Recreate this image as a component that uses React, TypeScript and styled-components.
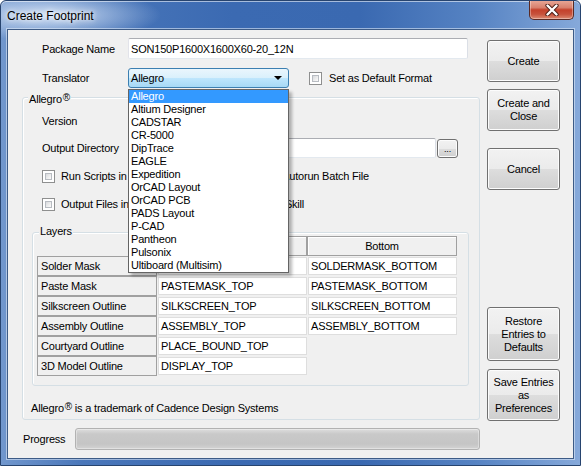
import styled, { createGlobalStyle } from 'styled-components'

const GlobalStyle = createGlobalStyle`
  html, body {
    margin: 0;
    padding: 0;
    background: #ffffff;
  }
  body {
    font-family: "Liberation Sans", Arial, sans-serif;
    font-size: 11px;
    letter-spacing: -0.2px;
    color: #000;
  }
`

const translators = [
  'Allegro',
  'Altium Designer',
  'CADSTAR',
  'CR-5000',
  'DipTrace',
  'EAGLE',
  'Expedition',
  'OrCAD Layout',
  'OrCAD PCB',
  'PADS Layout',
  'P-CAD',
  'Pantheon',
  'Pulsonix',
  'Ultiboard (Multisim)',
]

const layers = [
  { name: 'Solder Mask', top: 'SOLDERMASK_TOP', bottom: 'SOLDERMASK_BOTTOM' },
  { name: 'Paste Mask', top: 'PASTEMASK_TOP', bottom: 'PASTEMASK_BOTTOM' },
  { name: 'Silkscreen Outline', top: 'SILKSCREEN_TOP', bottom: 'SILKSCREEN_BOTTOM' },
  { name: 'Assembly Outline', top: 'ASSEMBLY_TOP', bottom: 'ASSEMBLY_BOTTOM' },
  { name: 'Courtyard Outline', top: 'PLACE_BOUND_TOP' },
  { name: '3D Model Outline', top: 'DISPLAY_TOP' },
]

const Window = styled.div`
  width: 581px;
  height: 466px;
  box-sizing: border-box;
  border: 1px solid #27446f;
  border-radius: 6px 6px 0 0;
  overflow: hidden;
  display: flex;
  flex-direction: column;
  background:
    radial-gradient(ellipse 110px 26px at 50px 14px, rgba(214, 228, 247, 0.95), rgba(214, 228, 247, 0) 100%),
    linear-gradient(90deg, #7197cd 0%, #4a77ba 14%, #3b6ab2 40%, #3a69b1 62%, #5683c3 82%, #86a9da 100%);
  box-shadow: inset 0 1px 0 rgba(255, 255, 255, 0.55);
`

const TitleBar = styled.div`
  height: 28px;
  flex: none;
  display: flex;
  align-items: flex-start;
  padding-left: 6px;
`

const Title = styled.span`
  margin-top: 8px;
  font-size: 12px;
  letter-spacing: 0;
  line-height: 14px;
  color: #000;
  text-shadow: 0 0 8px #fff, 0 0 4px rgba(255, 255, 255, 0.9);
`

const CloseButton = styled.div`
  margin-left: auto;
  margin-right: 6px;
  margin-top: -1px;
  width: 45px;
  height: 20px;
  box-sizing: border-box;
  border: 1px solid #5a2a24;
  border-top: none;
  border-radius: 0 0 5px 5px;
  background: linear-gradient(#e9aa9a 0%, #d8806d 40%, #c4412b 52%, #c7523c 75%, #dc8b72 100%);
  box-shadow: inset 0 0 0 1px rgba(255, 255, 255, 0.35);
  display: flex;
  align-items: center;
  justify-content: center;
`

const Client = styled.div`
  flex: 1;
  margin: 0 6px 6px 6px;
  border: 1px solid #3d5b86;
  box-shadow: 0 0 0 1px rgba(220, 232, 247, 0.6);
  background: #f0f0f0;
  display: grid;
  grid-template-columns: 472px 73px;
  column-gap: 7px;
  padding-right: 13px;
`

const MainColumn = styled.div`
  display: flex;
  flex-direction: column;
  padding-top: 8px;
`

const SideColumn = styled.div`
  display: flex;
  flex-direction: column;
  padding-top: 10px;
  padding-bottom: 37px;
`

const Row = styled.div<{ $h: number; $mt?: number; $pl?: number }>`
  display: flex;
  align-items: center;
  height: ${(p) => p.$h}px;
  margin-top: ${(p) => p.$mt ?? 0}px;
  padding-left: ${(p) => p.$pl ?? 0}px;
  flex: none;
`

const FieldLabel = styled.span<{ $w: number }>`
  width: ${(p) => p.$w}px;
  flex: none;
  white-space: nowrap;
`

const TextBox = styled.div<{ $w: number; $h: number }>`
  width: ${(p) => p.$w}px;
  height: ${(p) => p.$h}px;
  box-sizing: border-box;
  flex: none;
  background: #fff;
  border: 1px solid;
  border-color: #abadb3 #dbdfe6 #e3e9ef #e2e3ea;
  border-radius: 2px;
  padding-left: 2px;
  display: flex;
  align-items: center;
  white-space: nowrap;
`

const ComboWrap = styled.div`
  position: relative;
  flex: none;
`

const Combo = styled.div`
  width: 161px;
  height: 20px;
  box-sizing: border-box;
  border: 1px solid #3c7fb1;
  border-radius: 3px;
  background: linear-gradient(#eaf6fd 0%, #d9f0fc 50%, #bee6fd 51%, #a7d9f5 100%);
  display: flex;
  align-items: center;
  padding-left: 2px;
`

const Arrow = styled.span`
  margin-left: auto;
  margin-right: 6px;
  width: 0;
  height: 0;
  border-left: 4px solid transparent;
  border-right: 4px solid transparent;
  border-top: 4px solid #000;
`

const DropList = styled.ul`
  position: absolute;
  top: calc(100% + 1px);
  left: 0;
  z-index: 10;
  width: 161px;
  box-sizing: border-box;
  margin: 0;
  padding: 0;
  list-style: none;
  background: #fff;
  border: 1px solid #646464;
  box-shadow: 3px 3px 3px rgba(0, 0, 0, 0.28);
`

const DropItem = styled.li<{ $selected?: boolean }>`
  height: 13px;
  line-height: 13px;
  padding-left: 2px;
  white-space: nowrap;
  background: ${(p) => (p.$selected ? '#3399ff' : 'transparent')};
  color: ${(p) => (p.$selected ? '#fff' : '#000')};
`

const CheckBox = styled.span<{ $ml?: number }>`
  width: 13px;
  height: 13px;
  box-sizing: border-box;
  flex: none;
  margin-left: ${(p) => p.$ml ?? 0}px;
  border: 1px solid #8e8f8f;
  background: #fff;
  position: relative;

  &::after {
    content: '';
    position: absolute;
    inset: 2px;
    border: 1px solid #b8bcc2;
    background: linear-gradient(135deg, #d8dadd 0%, #f2f2f2 70%, #fafafa 100%);
  }
`

const CheckText = styled.span<{ $ml: number }>`
  margin-left: ${(p) => p.$ml}px;
  white-space: nowrap;
`

const GroupBox = styled.div<{ $h: number; $mt: number; $ml: number; $w: number }>`
  position: relative;
  flex: none;
  box-sizing: border-box;
  height: ${(p) => p.$h}px;
  width: ${(p) => p.$w}px;
  margin-top: ${(p) => p.$mt}px;
  margin-left: ${(p) => p.$ml}px;
  border: 1px solid #d5dfe5;
  border-radius: 3px;
  box-shadow: inset 1px 1px 0 #fff;
  display: flex;
  flex-direction: column;
`

const GroupLabel = styled.span<{ $left: number; $top: number }>`
  position: absolute;
  left: ${(p) => p.$left}px;
  top: ${(p) => p.$top}px;
  padding: 0 1px;
  line-height: 13px;
  background: #f0f0f0;
  white-space: nowrap;
`

const Reg = styled.span`
  font-size: 10px;
  vertical-align: 2px;
  margin-left: 1px;
`

const WinButton = styled.div<{ $h: number; $mt?: number; $auto?: boolean }>`
  height: ${(p) => p.$h}px;
  margin-top: ${(p) => (p.$auto ? 'auto' : `${p.$mt ?? 0}px`)};
  box-sizing: border-box;
  flex: none;
  border: 1px solid #707070;
  border-radius: 3px;
  background: linear-gradient(#f2f2f2 0%, #ebebeb 50%, #dddddd 51%, #cfcfcf 100%);
  box-shadow: inset 0 0 0 1px #fcfcfc;
  display: flex;
  align-items: center;
  justify-content: center;
  text-align: center;
  line-height: 13px;
`

const SmallButton = styled(WinButton)`
  width: 21px;
  margin-left: 1px;
  align-items: flex-end;
  padding-bottom: 3px;
  font-size: 9px;
  line-height: 9px;
`

const LayerGrid = styled.div`
  display: grid;
  grid-template-columns: 120px 150px 150px;
  grid-auto-rows: 20px;
  width: 420px;
  margin: 3px 0 0 4px;
`

const HeaderCell = styled.div`
  box-sizing: border-box;
  border: 1px solid #a0a0a0;
  background: #f0f0f0;
  display: flex;
  align-items: center;
  justify-content: center;
  box-shadow: inset 1px 1px 0 #fff;
`

const NameCell = styled.div`
  box-sizing: border-box;
  border: 1px solid #a0a0a0;
  background: #f0f0f0;
  display: flex;
  align-items: center;
  padding-left: 3px;
  white-space: nowrap;
`

const ValueCell = styled.div`
  box-sizing: border-box;
  margin: 1px 0 1px 1px;
  border: 1px solid #dedede;
  background: #fff;
  display: flex;
  align-items: center;
  padding-left: 2px;
  white-space: nowrap;
`

const Note = styled.div`
  margin: 14px 0 0 8px;
  line-height: 13px;
  white-space: nowrap;
`

const ProgressTrack = styled.div`
  width: 405px;
  height: 22px;
  box-sizing: border-box;
  border: 1px solid #b2b2b2;
  border-radius: 3px;
  background: linear-gradient(#dedede 0%, #c9c9c9 25%, #c5c5c5 75%, #d3d3d3 100%);
  box-shadow: inset 0 0 0 1px rgba(255, 255, 255, 0.35);
`

export default function App() {
  return (
    <>
      <GlobalStyle />
      <Window>
        <TitleBar>
          <Title>Create Footprint</Title>
          <CloseButton>
            <svg width="14" height="12" viewBox="0 0 14 12">
              <path d="M2.5 1.5 L11.5 10.5 M11.5 1.5 L2.5 10.5" stroke="#4a1c14" strokeWidth="4.2" strokeLinecap="round" />
              <path d="M2.5 1.5 L11.5 10.5 M11.5 1.5 L2.5 10.5" stroke="#ffffff" strokeWidth="2.4" strokeLinecap="round" />
            </svg>
          </CloseButton>
        </TitleBar>
        <Client>
          <MainColumn>
            <Row $h={21} $pl={34}>
              <FieldLabel $w={86}>Package Name</FieldLabel>
              <TextBox $w={340} $h={21}>SON150P1600X1600X60-20_12N</TextBox>
            </Row>
            <Row $h={20} $mt={9} $pl={34}>
              <FieldLabel $w={86}>Translator</FieldLabel>
              <ComboWrap>
                <Combo>
                  <span>Allegro</span>
                  <Arrow />
                </Combo>
                <DropList>
                  {translators.map((t, i) => (
                    <DropItem key={t} $selected={i === 0}>
                      {t}
                    </DropItem>
                  ))}
                </DropList>
              </ComboWrap>
              <CheckBox $ml={20} />
              <CheckText $ml={7}>Set as Default Format</CheckText>
            </Row>

            <GroupBox $h={323} $mt={9} $ml={14} $w={458}>
              <GroupLabel $left={5} $top={-7}>
                Allegro<Reg>®</Reg>
              </GroupLabel>
              <Row $h={20} $mt={13} $pl={19}>
                <FieldLabel $w={86}>Version</FieldLabel>
              </Row>
              <Row $h={20} $mt={7} $pl={19}>
                <FieldLabel $w={86}>Output Directory</FieldLabel>
                <TextBox $w={308} $h={20} />
                <SmallButton $h={19}>...</SmallButton>
              </Row>
              <Row $h={16} $mt={10} $pl={19}>
                <CheckBox />
                <CheckText $ml={6}>Run Scripts in Allegro PCB Designer, using the Autorun Batch File</CheckText>
              </Row>
              <Row $h={16} $mt={12} $pl={19}>
                <CheckBox />
                <CheckText $ml={6}>Output Files in Allegro PCB Format for use with Skill</CheckText>
              </Row>

              <GroupBox $h={154} $mt={20} $ml={9} $w={437}>
                <GroupLabel $left={6} $top={-8}>
                  Layers
                </GroupLabel>
                <LayerGrid>
                  <div />
                  <HeaderCell>Top</HeaderCell>
                  <HeaderCell>Bottom</HeaderCell>
                  {layers.map((l) => [
                    <NameCell key={l.name}>{l.name}</NameCell>,
                    <ValueCell key={l.name + '-top'}>{l.top}</ValueCell>,
                    l.bottom ? <ValueCell key={l.name + '-bottom'}>{l.bottom}</ValueCell> : <div key={l.name + '-bottom'} />,
                  ])}
                </LayerGrid>
              </GroupBox>

              <Note>
                Allegro<Reg>®</Reg> is a trademark of Cadence Design Systems
              </Note>
            </GroupBox>

            <Row $h={22} $mt={8} $pl={15}>
              <FieldLabel $w={52}>Progress</FieldLabel>
              <ProgressTrack />
            </Row>
          </MainColumn>

          <SideColumn>
            <WinButton $h={42}>Create</WinButton>
            <WinButton $h={42} $mt={7}>
              Create and
              <br />
              Close
            </WinButton>
            <WinButton $h={42} $mt={17}>
              Cancel
            </WinButton>
            <WinButton $h={54} $auto>
              Restore
              <br />
              Entries to
              <br />
              Defaults
            </WinButton>
            <WinButton $h={52} $mt={8}>
              Save Entries
              <br />
              as
              <br />
              Preferences
            </WinButton>
          </SideColumn>
        </Client>
      </Window>
    </>
  )
}
